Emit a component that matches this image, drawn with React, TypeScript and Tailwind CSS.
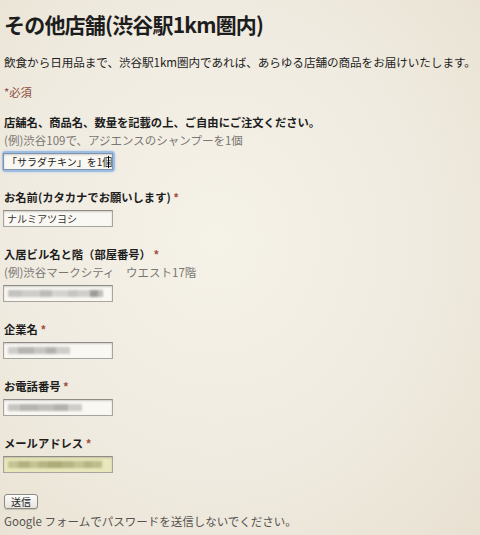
const JP = "font-['Noto_Sans_CJK_JP','Noto_Sans',sans-serif]";

function Star() {
  return <span className="text-[#a0493c]"> *</span>;
}

function Blur({ tint = "gray", blocks }: { tint?: "gray" | "olive"; blocks: [number, number, number][] }) {
  // [width, shade(0-1), offsetY]
  return (
    <div className="flex h-full items-center pl-[4px] blur-[1px]">
      {blocks.map(([w, s, y], i) => (
        <div
          key={i}
          className="h-[7px]"
          style={{
            width: w,
            marginTop: y,
            background:
              tint === "olive"
                ? `rgba(110,110,50,${s})`
                : `rgba(80,80,80,${s})`,
          }}
        />
      ))}
    </div>
  );
}

function Box({ children, auto }: { children?: React.ReactNode; auto?: boolean }) {
  return (
    <div
      className={`ml-[-1px] h-[17px] w-[110px] overflow-hidden border border-[#a8a5a0] border-t-[#8f8c88] shadow-[inset_0_1px_2px_rgba(0,0,0,0.18)] ${
        auto ? "bg-[#e9e8bd]" : "bg-[#faf8f3]"
      }`}
    >
      {children}
    </div>
  );
}

export default function App() {
  return (
    <div
      className={`${JP} min-h-[535px] w-full bg-[radial-gradient(ellipse_at_45%_45%,#f5f2e8_0%,#f0ebe0_55%,#e8e1d2_100%)] px-[4px] pt-[12px] text-[#1d1d1d]`}
    >
      <h1 className="text-[21px] font-bold leading-[24px] tracking-[-0.8px]">その他店舗(渋谷駅1km圏内)</h1>
      <p className="mt-[18px] text-[11.6px] leading-[16px] tracking-[-0.05px]">
        飲食から日用品まで、渋谷駅1km圏内であれば、あらゆる店舗の商品をお届けいたします。
      </p>
      <p className="mt-[14px] text-[11.3px] leading-[16px] text-[#8e4a40]">*必須</p>

      <div className="mt-[14px]">
        <p className="text-[11.3px] font-bold leading-[16px]">店舗名、商品名、数量を記載の上、ご自由にご注文ください。</p>
        <p className="mt-[2px] text-[11.5px] leading-[16px] text-[#7a7773]">(例)渋谷109で、アジエンスのシャンプーを1個</p>
        <div className="mt-[5px] w-fit rounded-[2px] shadow-[0_0_0_2px_#9dbde3,0_0_3px_2px_#b9d0ea]">
          <div className="ml-[-1px] flex h-[17px] w-[110px] items-center overflow-hidden border border-[#7f93ad] bg-[#faf8f3] pl-[3px] text-[10px] leading-none text-[#222] shadow-[inset_0_1px_2px_rgba(0,0,0,0.18)]">
            <span className="whitespace-nowrap">「サラダチキン」を1個</span>
            <span className="ml-[-4px] h-[12px] w-px bg-black" />
          </div>
        </div>
      </div>

      <div className="mt-[19px]">
        <p className="text-[11.3px] font-bold leading-[16px]">
          お名前(カタカナでお願いします)
          <Star />
        </p>
        <div className="mt-[5px]">
          <Box>
            <div className="flex h-full items-center pl-[3px] text-[10px] leading-none text-[#333]">ナルミアツヨシ</div>
          </Box>
        </div>
      </div>

      <div className="mt-[19px]">
        <p className="text-[11.3px] font-bold leading-[16px]">
          入居ビル名と階（部屋番号）
          <span className="text-[#a0493c]"> *</span>
        </p>
        <p className="mt-[2px] text-[11.5px] leading-[16px] text-[#7a7773]">(例)渋谷マークシティ　ウエスト17階</p>
        <div className="mt-[5px]">
          <Box>
            <Blur
              blocks={[
                [14, 0.32, 0],
                [18, 0.26, 0],
                [12, 0.36, 0],
                [16, 0.22, 0],
                [10, 0.3, 0],
                [12, 0.24, 0],
                [8, 0.55, -1],
                [5, 0.35, 0],
              ]}
            />
          </Box>
        </div>
      </div>

      <div className="mt-[19px]">
        <p className="text-[11.3px] font-bold leading-[16px]">
          企業名
          <Star />
        </p>
        <div className="mt-[5px]">
          <Box>
            <Blur
              blocks={[
                [10, 0.26, 0],
                [16, 0.4, 0],
                [12, 0.3, 0],
                [10, 0.42, 0],
                [14, 0.26, 0],
              ]}
            />
          </Box>
        </div>
      </div>

      <div className="mt-[19px]">
        <p className="text-[11.3px] font-bold leading-[16px]">
          お電話番号
          <Star />
        </p>
        <div className="mt-[5px]">
          <Box>
            <Blur
              blocks={[
                [12, 0.3, 0],
                [18, 0.4, 0],
                [16, 0.34, 0],
                [14, 0.42, 0],
                [14, 0.26, 0],
              ]}
            />
          </Box>
        </div>
      </div>

      <div className="mt-[19px]">
        <p className="text-[11.3px] font-bold leading-[16px]">
          メールアドレス
          <Star />
        </p>
        <div className="mt-[5px]">
          <Box auto>
            <Blur
              tint="olive"
              blocks={[
                [10, 0.3, 0],
                [12, 0.45, 0],
                [8, 0.3, 0],
                [10, 0.42, 0],
                [14, 0.5, 0],
                [12, 0.42, 0],
                [10, 0.3, 0],
                [8, 0.42, 0],
                [10, 0.36, 0],
              ]}
            />
          </Box>
        </div>
      </div>

      <button
        type="button"
        className="mt-[21px] flex h-[15px] w-[34px] items-center justify-center rounded-[3px] border border-[#8d8a86] bg-[linear-gradient(#fdfdfc,#e6e3dd)] text-[10px] leading-none text-[#222] shadow-[0_1px_1px_rgba(0,0,0,0.15)]"
      >
        送信
      </button>
      <p className="mt-[4px] text-[11.5px] leading-[16px] text-[#555350]">Google フォームでパスワードを送信しないでください。</p>
    </div>
  );
}
